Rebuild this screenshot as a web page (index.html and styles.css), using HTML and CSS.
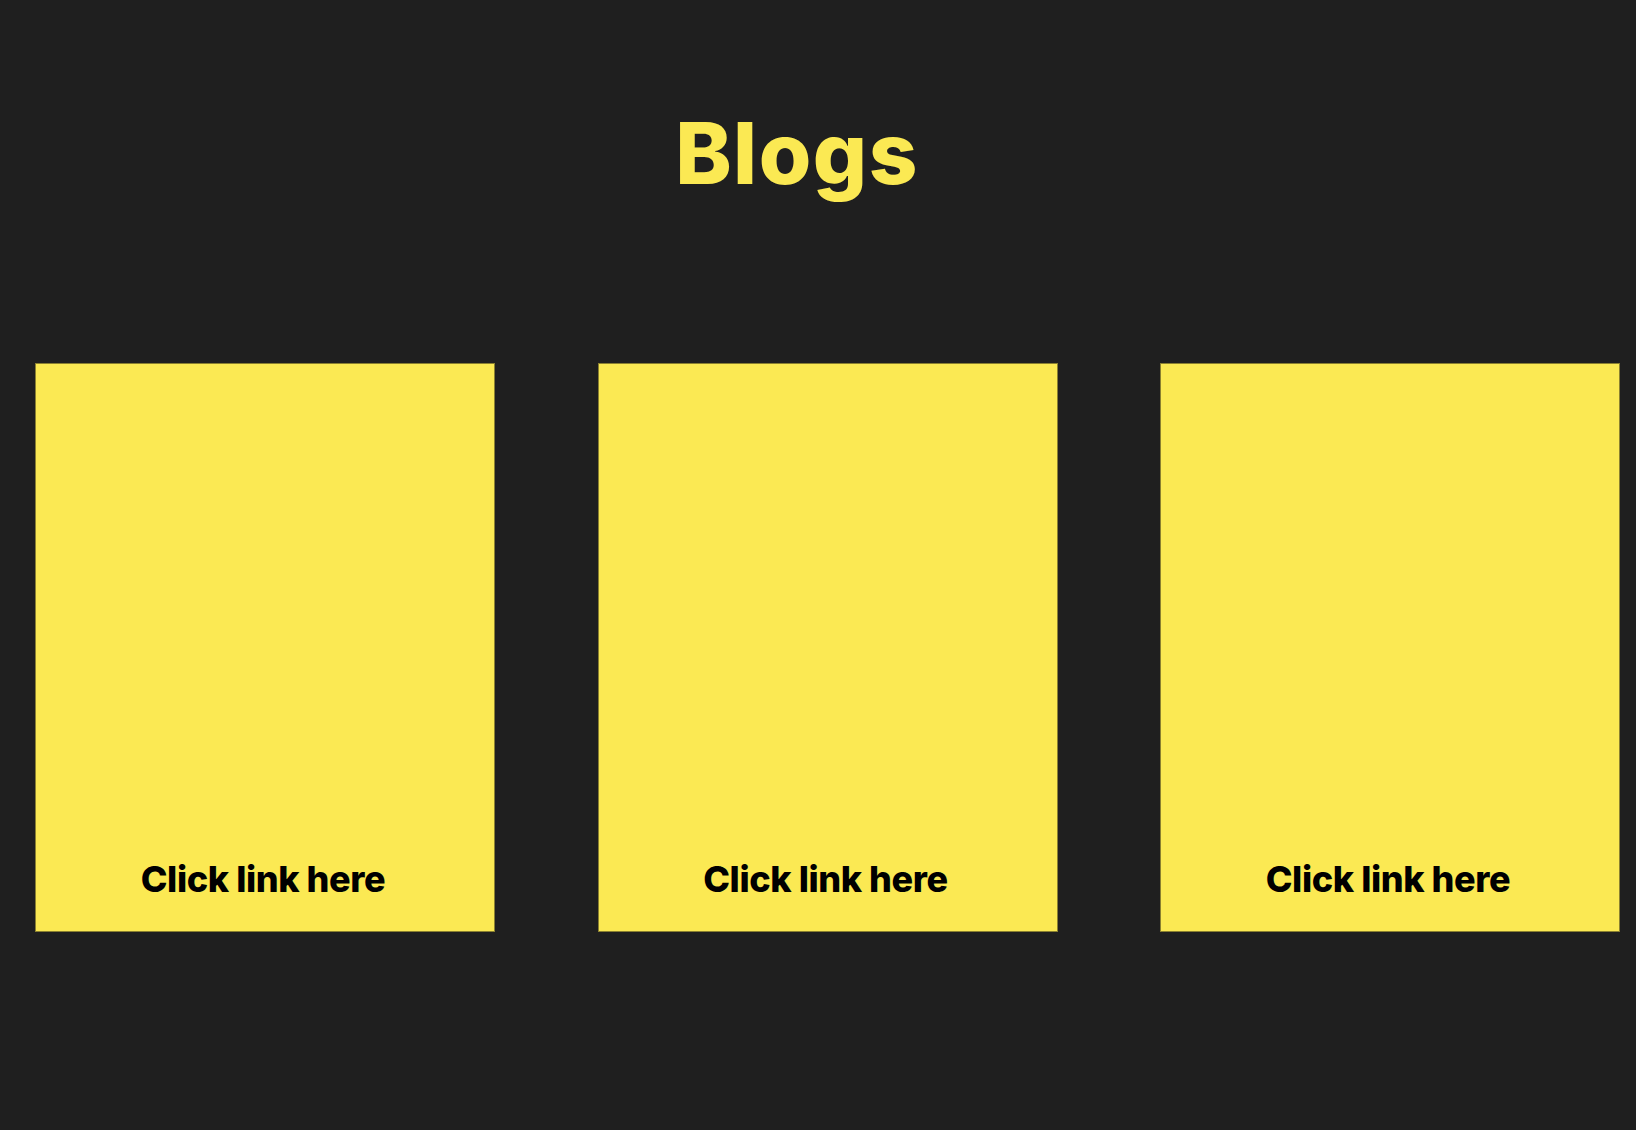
FILE: index.html
```html
<!DOCTYPE html>
<html>
<head>
<meta charset="utf-8">
<link rel="stylesheet" href="styles.css">
</head>
<body>
<h1 class="title">Blogs</h1>
<div class="cards">
  <a class="card" href="#"><span class="link">Click link here</span></a>
  <a class="card" href="#"><span class="link">Click link here</span></a>
  <a class="card" href="#"><span class="link">Click link here</span></a>
</div>
</body>
</html>
```
FILE: styles.css
```css
html, body {
  margin: 0;
  padding: 0;
  background: #1f1f1f;
  height: 100%;
}
body {
  font-family: Inter, "Noto Sans", sans-serif;
}
.title {
  margin: 0;
  padding-top: 104px;
  text-align: center;
  color: #fbe953;
  font-size: 85px;
  font-weight: 800;
  line-height: 100px;
  letter-spacing: 1.5px;
  padding-right: 42px;
}
.cards {
  display: flex;
  gap: 102.5px;
  padding-left: 35px;
  margin-top: 159px;
}
.card {
  box-sizing: border-box;
  width: 460px;
  height: 569px;
  background: #fbe953;
  border: 1px solid #8a8030;
  display: flex;
  align-items: flex-end;
  justify-content: center;
  text-decoration: none;
  padding-bottom: 30px;
  padding-right: 4px;
}
.link {
  color: #000;
  font-size: 36px;
  font-weight: 800;
  line-height: 44px;
  letter-spacing: -0.4px;
}
```
